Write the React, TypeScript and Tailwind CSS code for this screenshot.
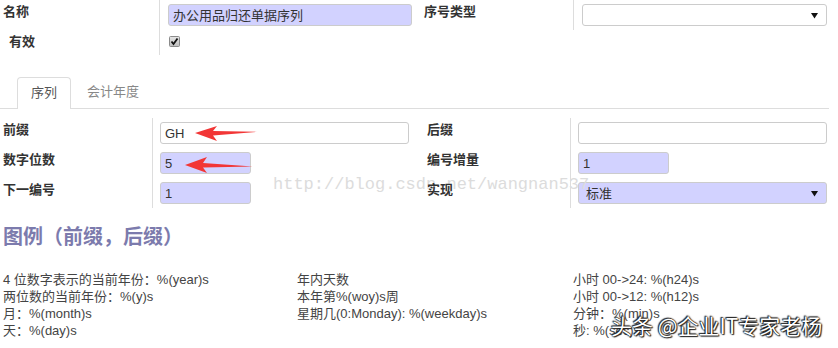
import React from "react";

const Input = ({ w, h, value, lav }: { w: string; h: string; value?: string; lav?: boolean }) => (
  <div
    className={`${w} ${h} ${lav ? "bg-[#d2d2ff]" : "bg-white"} border border-[#cccccc] rounded-[3px] pl-[4px] text-[13px] text-[#333] flex items-center leading-none`}
  >
    {value}
  </div>
);

const Arrow = () => (
  <svg width="7" height="7" viewBox="0 0 7 7" className="ml-auto mr-[8px]">
    <path d="M0 1 L7 1 L3.5 6.5 Z" fill="#111" />
  </svg>
);

const Select = ({ w, value, lav }: { w: string; value?: string; lav?: boolean }) => (
  <div
    className={`${w} h-[22px] ${lav ? "bg-[#d2d2ff]" : "bg-white"} border border-[#cccccc] rounded-[3px] pl-[7px] text-[13px] text-[#333] flex items-center leading-none`}
  >
    {value}
    <Arrow />
  </div>
);

const Label = ({ children, cls }: { children: React.ReactNode; cls: string }) => (
  <div className={`${cls} pt-[2px] text-[13px] font-bold leading-[20px] text-[#333] relative z-10`}>{children}</div>
);

export default function App() {
  return (
    <div className="relative w-[838px] h-[348px] overflow-hidden bg-white font-['Liberation_Sans','Noto_Sans_CJK_SC',sans-serif] text-[#333]">
      {/* top rows */}
      <div className="flex h-[30px]">
        <Label cls="w-[160px] border-r border-[#dddddd] pl-[3px]">名称</Label>
        <div className="w-[252px] pl-[8px] pt-[4px]">
          <Input w="w-[244px]" h="h-[22px]" value="办公用品归还单据序列" lav />
        </div>
        <Label cls="w-[162px] border-r border-[#dddddd] pl-[12px]">序号类型</Label>
        <div className="pl-[8px] pt-[4px]">
          <Select w="w-[245px]" />
        </div>
      </div>
      <div className="flex h-[25px]">
        <Label cls="w-[160px] border-r border-[#dddddd] pl-[9px]">有效</Label>
        <div className="pl-[9px] pt-[6px]">
          <svg width="11" height="11" viewBox="0 0 11 11">
            <defs>
              <linearGradient id="cb" x1="0" y1="0" x2="0" y2="1">
                <stop offset="0" stopColor="#e6e6e6" />
                <stop offset="1" stopColor="#bdbdbd" />
              </linearGradient>
            </defs>
            <rect x="0.5" y="0.5" width="10" height="10" rx="1" fill="url(#cb)" stroke="#8a8a8a" />
            <path d="M2.5 5.5 L4.5 8 L8.5 2.5" fill="none" stroke="#111" strokeWidth="1.8" />
          </svg>
        </div>
      </div>

      {/* tabs */}
      <div className="mt-[22px] flex h-[32px] w-[829px] border-b border-[#dddddd] pl-[17px]">
        <div className="h-[32px] rounded-t-[4px] border-x border-t border-[#dddddd] bg-white px-[13px] text-[13px] leading-[30px] text-[#555]">
          序列
        </div>
        <div className="ml-[2px] h-[31px] px-[14px] text-[13px] leading-[30px] text-[#888]">会计年度</div>
      </div>

      {/* sequence rows */}
      <div className="mt-[9px]">
        <div className="flex h-[30px]">
          <Label cls="w-[153px] border-r border-[#dddddd] pl-[3px]">前缀</Label>
          <div className="w-[262px] pl-[7px] pt-[4px]">
            <Input w="w-[249px]" h="h-[22px]" value="GH" />
          </div>
          <Label cls="w-[156px] border-r border-[#dddddd] pl-[12px]">后缀</Label>
          <div className="pl-[7px] pt-[4px]">
            <Input w="w-[249px]" h="h-[22px]" />
          </div>
        </div>
        <div className="flex h-[30px]">
          <Label cls="w-[153px] border-r border-[#dddddd] pl-[3px]">数字位数</Label>
          <div className="w-[262px] pl-[7px] pt-[4px]">
            <Input w="w-[91px]" h="h-[22px]" value="5" lav />
          </div>
          <Label cls="w-[156px] border-r border-[#dddddd] pl-[12px]">编号增量</Label>
          <div className="pl-[7px] pt-[4px]">
            <Input w="w-[91px]" h="h-[22px]" value="1" lav />
          </div>
        </div>
        <div className="flex h-[30px]">
          <Label cls="w-[153px] border-r border-[#dddddd] pl-[3px]">下一编号</Label>
          <div className="w-[262px] pl-[7px] pt-[4px]">
            <Input w="w-[91px]" h="h-[22px]" value="1" lav />
          </div>
          <Label cls="w-[156px] border-r border-[#dddddd] pl-[12px]">实现</Label>
          <div className="pl-[7px] pt-[4px]">
            <Select w="w-[249px]" value="标准" lav />
          </div>
        </div>
      </div>

      {/* heading */}
      <div className="mt-[15px] pl-[3px] text-[20px] font-bold leading-[28px] text-[#7c7bad]">图例（前缀，后缀）</div>

      {/* legend */}
      <div className="mt-[20px] flex pl-[3px] text-[13px] leading-[17px] text-[#444]">
        <div className="w-[294px]">
          <div>4 位数字表示的当前年份：%(year)s</div>
          <div>两位数的当前年份：%(y)s</div>
          <div>月：%(month)s</div>
          <div>天：%(day)s</div>
        </div>
        <div className="w-[276px]">
          <div>年内天数</div>
          <div>本年第%(woy)s周</div>
          <div>星期几(0:Monday): %(weekday)s</div>
        </div>
        <div>
          <div>小时 00-&gt;24: %(h24)s</div>
          <div>小时 00-&gt;12: %(h12)s</div>
          <div>分钟：%(min)s</div>
          <div>秒: %(sec)s</div>
        </div>
      </div>

      {/* overlays */}
      <div className="absolute left-[273px] top-[175px] z-0 font-['Liberation_Mono',monospace] text-[17px] leading-[20px] text-[#dcdcdc]">
        http://blog.csdn.net/wangnan537
      </div>
      <svg className="absolute left-0 top-0 z-20" width="838" height="348" viewBox="0 0 838 348">
        <path d="M195 133 L217 126 L213 131 L257 131.8 L213 135.5 L217 141 Z" fill="#f23636" />
        <path d="M185 165 L207 157 L203 163 L253 166.5 L203 167.5 L207 173 Z" fill="#f23636" />
      </svg>
      <div className="absolute left-[611px] top-[311px] z-30 font-['Noto_Sans_CJK_SC',sans-serif] text-[21px] leading-[28px] text-white [text-shadow:0_0_1px_#000,0_0_2px_#000,1px_1px_1px_#333,-1px_-1px_1px_#333]">
        头条 @企业IT专家老杨
      </div>
    </div>
  );
}
